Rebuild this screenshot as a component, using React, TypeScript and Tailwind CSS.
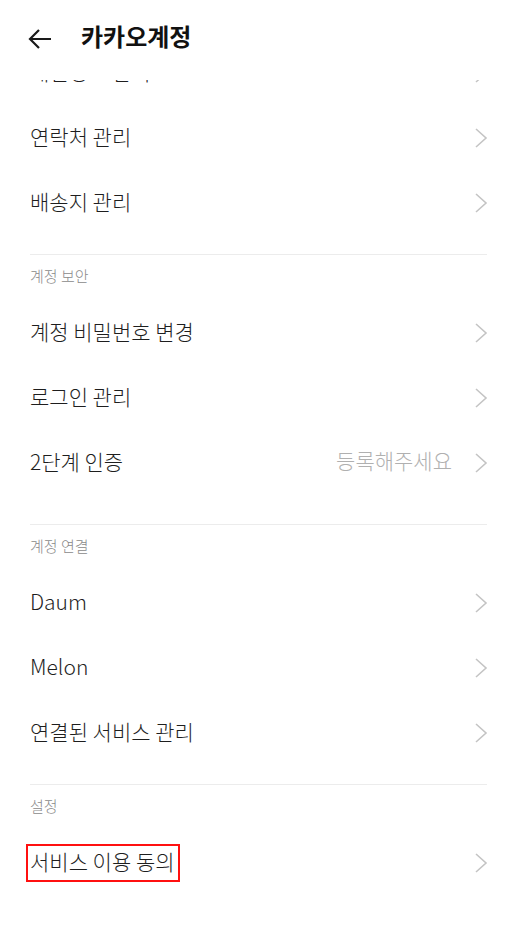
import React from "react";

const font = { fontFamily: '"Noto Sans CJK KR", "Noto Sans", sans-serif' };

function Chevron() {
  return (
    <svg width="14" height="22" viewBox="0 0 14 22" className="shrink-0 mt-[3px]">
      <polyline points="2,2 12,11 2,20" fill="none" stroke="#c4c4c4" strokeWidth="1.6" strokeLinejoin="miter" />
    </svg>
  );
}

function Row({ label, right, boxed }: { label: string; right?: string; boxed?: boolean }) {
  return (
    <div className="h-[65px] flex items-center justify-between pl-[30px] pr-[29px] pb-[3px]">
      <span className="relative text-[21px] leading-[28px] text-[#1e1e1e] font-light">
        {label}
        {boxed && (
          <span className="absolute left-[-4px] right-[-5px] top-[-3px] bottom-[-7px] border-2 border-[#ff1010]" />
        )}
      </span>
      <div className="flex items-center gap-[22px]">
        {right && <span className="text-[21px] text-[#b0b0b0] font-light">{right}</span>}
        <Chevron />
      </div>
    </div>
  );
}

function SectionHeader({ title }: { title: string }) {
  return (
    <div className="mx-[30px]">
      <div className="h-px bg-[#ececec]" />
      <div className="h-[45px] flex items-center pb-[2px] text-[15px] text-[#8a8a8a] font-light">{title}</div>
    </div>
  );
}

export default function App() {
  return (
    <div className="w-[517px] h-[925px] bg-white overflow-hidden" style={font}>
      <header className="relative z-10 h-[80px] bg-white flex items-start pt-[21px] pl-[27px]">
        <svg width="26" height="22" viewBox="0 0 26 22" className="mt-[7px]">
          <path d="M24 11H3 M12 2L3 11L12 20" fill="none" stroke="#1a1a1a" strokeWidth="2.2" strokeLinecap="butt" strokeLinejoin="miter" />
        </svg>
        <h1 className="ml-[28px] text-[24px] leading-[30px] font-bold text-[#111]">카카오계정</h1>
      </header>
      <div className="-mt-[40px]">
        <Row label="개인정보 관리" />
        <Row label="연락처 관리" />
        <Row label="배송지 관리" />
        <div className="h-[19px]" />
        <SectionHeader title="계정 보안" />
        <Row label="계정 비밀번호 변경" />
        <Row label="로그인 관리" />
        <Row label="2단계 인증" right="등록해주세요" />
        <div className="h-[29px]" />
        <SectionHeader title="계정 연결" />
        <Row label="Daum" />
        <Row label="Melon" />
        <Row label="연결된 서비스 관리" />
        <div className="h-[19px]" />
        <SectionHeader title="설정" />
        <Row label="서비스 이용 동의" boxed />
      </div>
    </div>
  );
}
